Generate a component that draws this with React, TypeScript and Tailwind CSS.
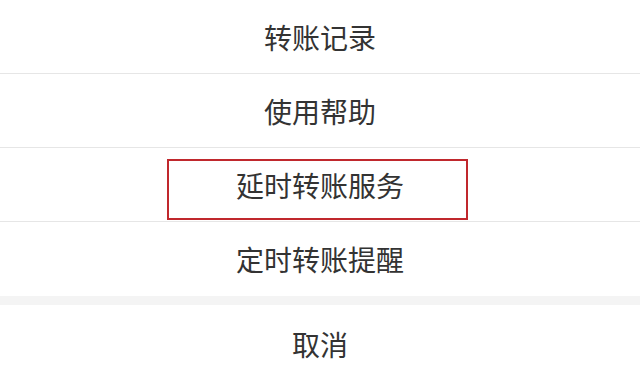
import React from "react";

// Action sheet from a transfer screen: four options, a gap, then cancel.
// The third option carries a red annotation box, drawn over the row.

const items = ["转账记录", "使用帮助", "延时转账服务", "定时转账提醒"];

export default function App() {
  return (
    <div
      className="w-[640px] h-[382px] overflow-hidden bg-white text-[#333333]"
      style={{ fontFamily: '"Noto Sans CJK SC", "Noto Sans", sans-serif' }}
    >
      {items.map((label, i) => (
        <Row key={label} label={label} highlight={i === 2} last={i === items.length - 1} />
      ))}
      <div className="h-[9px] bg-[#f4f4f4]" />
      <div className="h-[78px] flex items-center justify-center text-[28px] leading-none">
        取消
      </div>
    </div>
  );
}

function Row({
  label,
  highlight,
  last,
}: {
  label: string;
  highlight?: boolean;
  last?: boolean;
}) {
  return (
    <div
      className={[
        "relative h-[74px] flex items-center justify-center",
        last ? "" : "border-b border-[#e6e6e6]",
      ].join(" ")}
    >
      <span className="text-[28px] leading-none">{label}</span>
      {highlight && (
        <span className="absolute left-[167px] top-[11px] w-[301px] h-[61px] border-2 border-[#c0282d]" />
      )}
    </div>
  );
}
